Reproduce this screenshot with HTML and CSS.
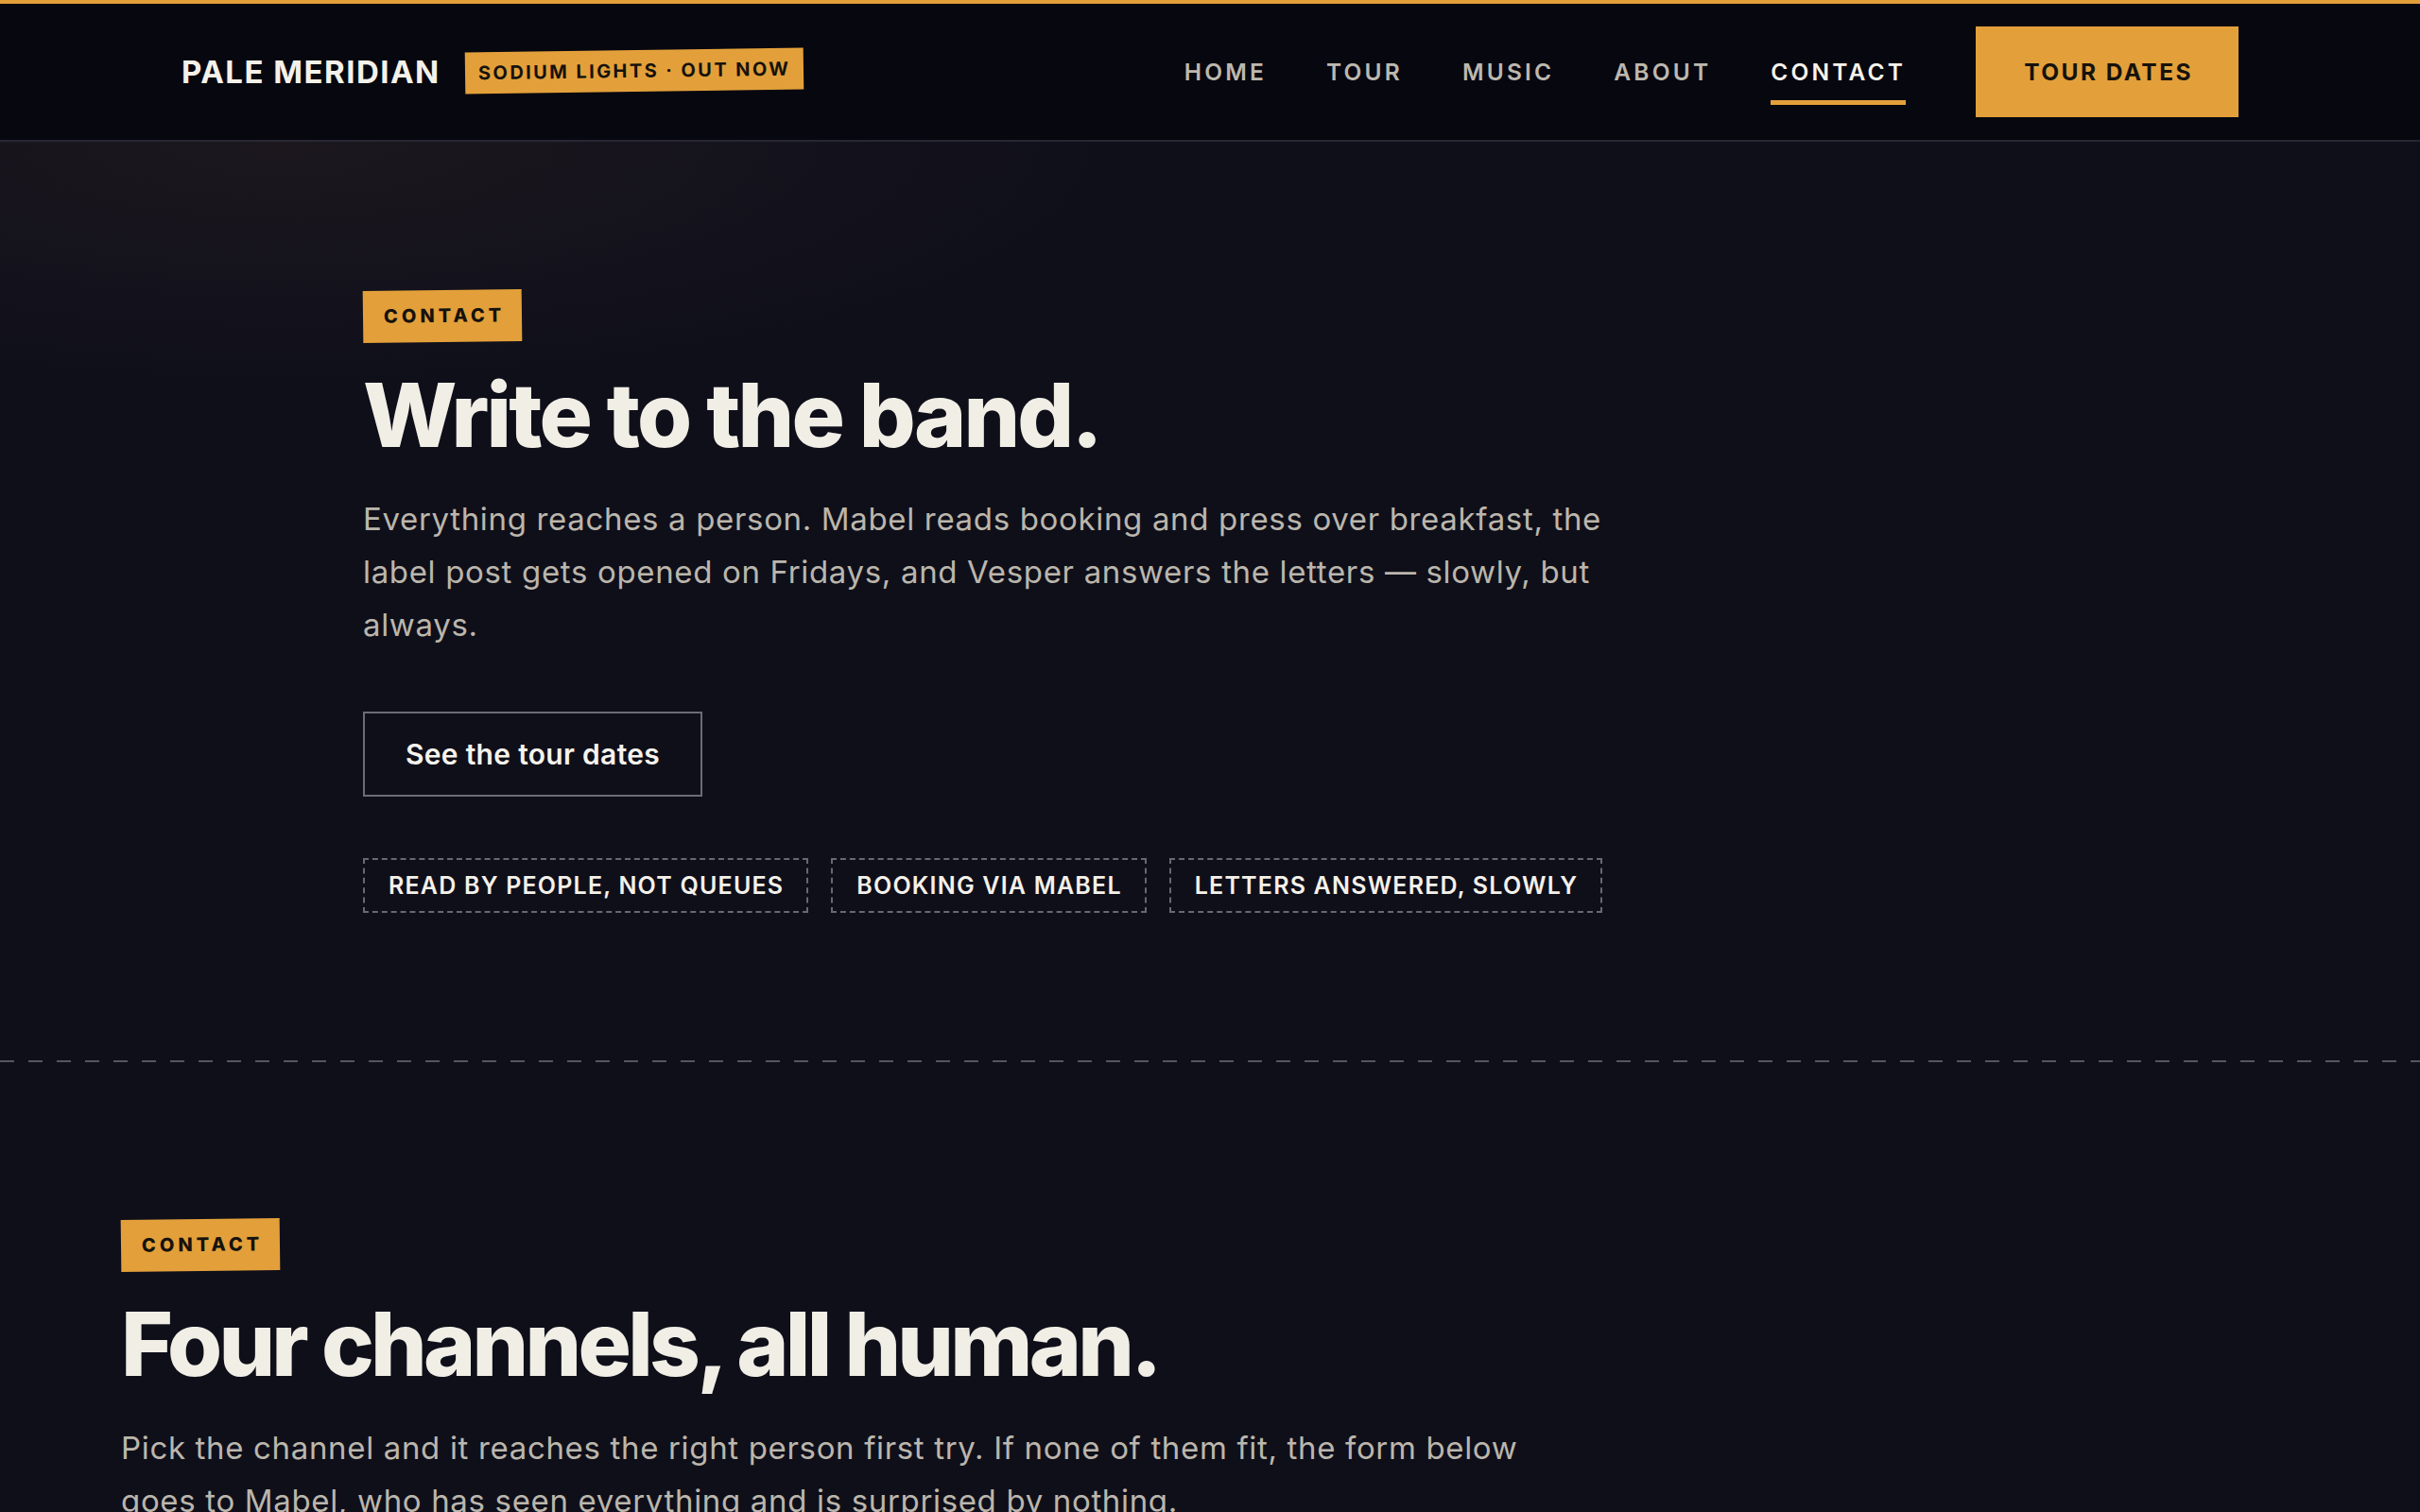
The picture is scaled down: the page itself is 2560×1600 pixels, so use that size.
FILE: index.html
```html
<!DOCTYPE html>
<html lang="en">
<head>
<meta charset="utf-8">
<title>Contact — Pale Meridian</title>
<link rel="stylesheet" href="styles.css">
</head>
<body>
<header class="site-header">
  <div class="brand">
    <a class="logo" href="#">PALE MERIDIAN</a>
    <span class="badge">SODIUM LIGHTS · OUT NOW</span>
  </div>
  <div class="header-right">
    <nav class="nav">
      <a href="#">HOME</a>
      <a href="#">TOUR</a>
      <a href="#">MUSIC</a>
      <a href="#">ABOUT</a>
      <a href="#" class="active">CONTACT</a>
    </nav>
    <a class="btn-primary" href="#">TOUR DATES</a>
  </div>
</header>

<main>
  <section class="hero">
    <span class="label">CONTACT</span>
    <h1 class="title">Write to the band.</h1>
    <p class="lead hero-lead">Everything reaches a person. Mabel reads booking and press over breakfast, the label post gets opened on Fridays, and Vesper answers the letters — slowly, but always.</p>
    <a class="btn-outline" href="#">See the tour dates</a>
    <ul class="chips">
      <li>READ BY PEOPLE, NOT QUEUES</li>
      <li>BOOKING VIA MABEL</li>
      <li>LETTERS ANSWERED, SLOWLY</li>
    </ul>
  </section>

  <div class="divider"></div>

  <section class="channels">
    <span class="label">CONTACT</span>
    <h2 class="title">Four channels, all human.</h2>
    <p class="lead channels-lead">Pick the channel and it reaches the right person first try. If none of them fit, the form below goes to Mabel, who has seen everything and is surprised by nothing.</p>
  </section>
</main>
</body>
</html>
```

FILE: styles.css
```css
* { box-sizing: border-box; }

html, body {
  margin: 0;
  padding: 0;
}

body {
  background: #0f0f1a;
  color: #f1eee6;
  font-family: "Inter", "Liberation Sans", sans-serif;
  min-height: 1600px;
}

a { color: inherit; text-decoration: none; }

/* ---------- header ---------- */
.site-header {
  display: flex;
  align-items: center;
  justify-content: space-between;
  padding: 24px 192px;
  background: #07070f;
  border-top: 4px solid #e3a03a;
  border-bottom: 2px solid #272733;
}

.brand {
  display: flex;
  align-items: center;
  gap: 26px;
}

.logo {
  font-size: 33px;
  font-weight: 700;
  letter-spacing: 0.045em;
  color: #f4f1ea;
}

.badge {
  display: inline-block;
  background: #e3a03a;
  color: #16120c;
  font-size: 20px;
  font-weight: 700;
  letter-spacing: 0.12em;
  padding: 10px 14px 10px 14px;
  line-height: 24px;
  transform: rotate(-0.8deg);
  margin-top: -2px;
}

.header-right {
  display: flex;
  align-items: center;
  gap: 74px;
}

.nav {
  display: flex;
  gap: 63px;
}

.nav a {
  position: relative;
  font-size: 24.5px;
  font-weight: 600;
  letter-spacing: 0.13em;
  color: #bdb8ae;
  line-height: 30px;
}

.nav a.active {
  color: #f6f3ec;
}

.nav a.active::after {
  content: "";
  position: absolute;
  left: 0;
  right: 0;
  top: 45px;
  height: 5px;
  background: #e3a03a;
}

.btn-primary {
  display: inline-flex;
  align-items: center;
  justify-content: center;
  height: 96px;
  padding: 0 48px 0 51px;
  background: #e3a03a;
  color: #16120c;
  font-size: 24.5px;
  font-weight: 700;
  letter-spacing: 0.1em;
}

/* ---------- shared ---------- */
.label {
  display: inline-block;
  background: #e3a03a;
  color: #16120c;
  font-size: 20px;
  font-weight: 800;
  letter-spacing: 0.2em;
  line-height: 24px;
  padding: 15px 18px 16px 22px;
  transform: rotate(-0.7deg);
}

.title {
  margin: 30px 0 0;
  font-size: 94px;
  line-height: 1;
  font-weight: 800;
  letter-spacing: -0.035em;
  color: #f1eee6;
}

.lead {
  margin: 35px 0 0;
  font-size: 33px;
  line-height: 56px;
  font-weight: 400;
  letter-spacing: 0.02em;
  color: #bbb6ac;
}

/* ---------- hero ---------- */
.hero {
  padding: 157px 384px 156px;
  background:
    radial-gradient(ellipse 900px 260px at 300px 0px, rgba(60, 45, 40, 0.28), rgba(15, 15, 26, 0) 100%);
}

.hero .title { letter-spacing: -0.03em; }

.hero-lead {
  max-width: 1350px;
}

.btn-outline {
  display: flex;
  align-items: center;
  justify-content: center;
  width: 359px;
  height: 90px;
  margin-top: 64px;
  border: 2px solid #6c6c78;
  color: #f6f3ec;
  font-size: 30px;
  font-weight: 600;
  letter-spacing: 0.01em;
}

.chips {
  display: flex;
  gap: 24px;
  list-style: none;
  margin: 65px 0 0;
  padding: 0;
}

.chips li {
  display: flex;
  align-items: center;
  height: 58px;
  padding: 0 24px 0 25px;
  border: 2px dashed #686873;
  color: #f4f1ea;
  font-size: 25px;
  font-weight: 600;
  letter-spacing: 0.048em;
}

/* ---------- divider ---------- */
.divider {
  height: 2px;
  background: repeating-linear-gradient(90deg, #55555f 0 15px, transparent 15px 30px);
}

/* ---------- channels ---------- */
.channels {
  padding: 166px 128px 120px;
}

.channels .title { letter-spacing: -0.04em; }

.channels-lead {
  max-width: 1505px;
}
```
